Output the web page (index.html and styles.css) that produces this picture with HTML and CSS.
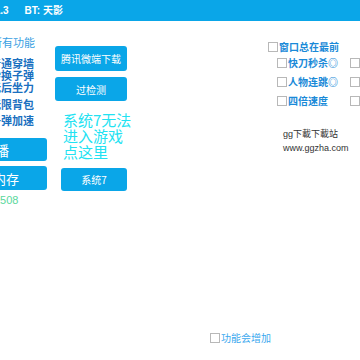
FILE: index.html
```html
<!DOCTYPE html>
<html lang="zh-CN">
<head>
  <meta charset="UTF-8" />
  <meta name="viewport" content="width=device-width, initial-scale=1.0" />
  <title>V1.3 BT: 天影</title>
  <link rel="stylesheet" href="styles.css">
</head>
<body>
  <div class="titlebar"><span class="ver">V1.3</span><span class="by">BT: 天影</span></div>

  <div class="main">
    <div class="col-left">
      <div class="group-title">所有功能</div>
      <ul class="feats">
        <li>普通穿墙</li>
        <li>秒换子弹</li>
        <li>无后坐力</li>
        <li class="gap1">无限背包</li>
        <li class="gap2">子弹加速</li>
      </ul>
      <button class="btn big b1">直播</button>
      <button class="btn big b2">内存</button>
      <div class="count">1508</div>
    </div>

    <div class="col-mid">
      <button class="btn sm">腾讯微端下载</button>
      <button class="btn sm m2">过检测</button>
      <div class="tip">系统7无法<br>进入游戏<br>点这里</div>
      <button class="btn sm m3">系统7</button>
    </div>

    <div class="col-right">
      <label class="chk"><span class="box"></span>窗口总在最前</label>
      <div class="grid">
        <label class="chk"><span class="box"></span>快刀秒杀◎</label>
        <label class="chk"><span class="box"></span></label>
        <label class="chk"><span class="box"></span>人物连跳◎</label>
        <label class="chk"><span class="box"></span></label>
        <label class="chk"><span class="box"></span>四倍速度</label>
        <label class="chk"><span class="box"></span></label>
      </div>
      <div class="site">gg下載下載站<br>www.ggzha.com</div>
    </div>
  </div>

  <div class="footer">
    <label class="chk light"><span class="box"></span>功能会增加</label>
  </div>
</body>
</html>
```

FILE: styles.css
```css
body {
  margin: 0;
  width: 360px;
  height: 360px;
  overflow: hidden;
  background: #ffffff;
  font-family: "Noto Sans CJK SC", sans-serif;
}
.titlebar {
  height: 21px;
  background: #0aa6e8;
  color: #ffffff;
  font: bold 10px/21px "Liberation Sans", "Noto Sans CJK SC", sans-serif;
  white-space: nowrap;
}
.ver {
  margin-left: -12px;
}
.by {
  margin-left: 16px;
}
.main {
  display: flex;
  align-items: flex-start;
  height: 311px;
}
.col-left {
  flex-shrink: 0;
  width: 59px;
  margin-left: -12px;
  padding-top: 15px;
}
.group-title {
  margin-left: 3px;
  font-size: 11px;
  line-height: 12px;
  color: #3a9fe2;
  white-space: nowrap;
}
.feats {
  list-style: none;
  margin: 9px 0 0 2px;
  padding: 0;
  font-size: 11px;
  line-height: 12px;
  font-weight: bold;
  color: #1a70c0;
  white-space: nowrap;
}
.feats .gap1 {
  margin-top: 5px;
}
.feats .gap2 {
  margin-top: 4px;
}
.btn {
  display: flex;
  align-items: center;
  justify-content: center;
  padding: 0;
  border: none;
  border-radius: 3px;
  background: #0aa6e8;
  color: #ffffff;
  font-family: "Noto Sans CJK SC", sans-serif;
  white-space: nowrap;
}
.big {
  width: 59px;
  justify-content: flex-end;
  font-size: 14px;
}
.b1 {
  height: 23px;
  margin-top: 12px;
  padding-right: 38px;
}
.b2 {
  height: 24px;
  margin-top: 5px;
  padding-right: 28px;
  font-size: 13px;
}
.count {
  margin: 4px 0 0 6px;
  font: 11px/12px "Liberation Sans", sans-serif;
  color: #5ad89c;
}
.col-mid {
  flex-shrink: 0;
  width: 72px;
  margin-left: 8px;
  padding-top: 25px;
}
.sm {
  width: 72px;
  height: 25px;
  font-size: 10px;
}
.m2 {
  height: 24px;
  margin-top: 6px;
}
.tip {
  margin: 11px 0 0 8px;
  font-size: 15px;
  line-height: 16px;
  color: #22e2f2;
  white-space: nowrap;
}
.m3 {
  width: 66px;
  height: 23px;
  margin: 8px 0 0 6px;
}
.col-right {
  flex-shrink: 0;
  margin-left: 141px;
  padding-top: 20px;
}
.chk {
  display: flex;
  align-items: center;
  gap: 1px;
  height: 12px;
  font-size: 10px;
  line-height: 12px;
  font-weight: bold;
  color: #1a8ad8;
  white-space: nowrap;
}
.box {
  flex-shrink: 0;
  box-sizing: border-box;
  width: 10px;
  height: 10px;
  border: 1px solid #b8b8b8;
  background: #ffffff;
}
.grid {
  display: grid;
  grid-template-columns: 73px 73px;
  row-gap: 7px;
  margin: 4px 0 0 9px;
}
.site {
  margin: 20px 0 0 15px;
  font: 9px/14px "Liberation Sans", "Noto Sans CJK TC", sans-serif;
  color: #333333;
  white-space: nowrap;
}
.footer {
  padding-left: 210px;
}
.chk.light {
  font-weight: normal;
  color: #3aa8ee;
}
```
